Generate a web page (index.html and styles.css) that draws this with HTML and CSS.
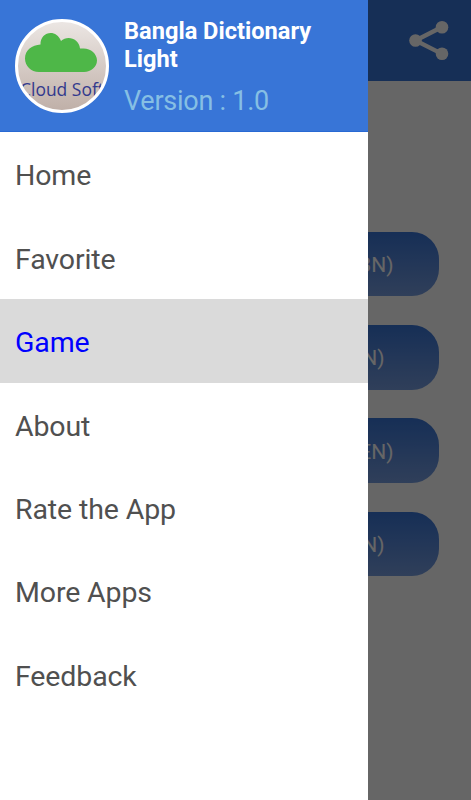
FILE: index.html
```html
<!DOCTYPE html>
<html lang="en">
<head>
<meta charset="utf-8">
<title>Bangla Dictionary Light</title>
<link rel="stylesheet" href="styles.css">
</head>
<body>
<main class="screen">
  <header class="toolbar">
    <svg class="share" viewBox="0 0 40 40" width="40" height="40">
      <path d="M33 6 6.500 19.500 33 32.800" fill="none" stroke="#fff" stroke-width="4.300"/>
      <circle cx="6.500" cy="19.500" r="6.300" fill="#fff"/>
      <circle cx="33" cy="6.300" r="6.300" fill="#fff"/>
      <circle cx="33" cy="32.800" r="6.300" fill="#fff"/>
    </svg>
  </header>
  <section class="actions">
    <div class="action wide">BN)</div>
    <div class="action">N)</div>
    <div class="action wide">EN)</div>
    <div class="action">N)</div>
  </section>
</main>
<div class="scrim"></div>
<aside class="drawer">
  <header class="profile">
    <svg class="logo" viewBox="0 0 96 96" width="96" height="96">
      <defs>
        <linearGradient id="paper" x1="0" y1="0" x2="0" y2="1"><stop offset="0" stop-color="#ece7e4"/><stop offset="1" stop-color="#bfafa7"/></linearGradient>
        <clipPath id="round"><circle cx="48" cy="48" r="45"/></clipPath>
      </defs>
      <circle cx="48" cy="48" r="45.500" fill="url(#paper)"/>
      <path d="M25 54H70a13.500 11.700 0 0 0 13-11.500C83 36 77 30.500 69.500 30.500H66C65 20 53 17 47 23C42 10 26 14 26.500 26.500C18 27 11 32 11 40.500C11 48 17 54 25 54Z" fill="#4eb748"/>
      <text class="logo-text" x="48" y="78.300" text-anchor="middle" textLength="84" lengthAdjust="spacingAndGlyphs" clip-path="url(#round)">Cloud Soft</text>
      <circle cx="48" cy="48" r="45.500" fill="none" stroke="#fff" stroke-width="3"/>
    </svg>
    <div class="details">
      <h1 class="name">Bangla Dictionary<br>Light</h1>
      <p class="version">Version : 1.0</p>
    </div>
  </header>
  <nav class="menu">
    <a class="item">Home</a>
    <a class="item">Favorite</a>
    <a class="item selected">Game</a>
    <a class="item">About</a>
    <a class="item">Rate the App</a>
    <a class="item">More Apps</a>
    <a class="item">Feedback</a>
  </nav>
</aside>
</body>
</html>
```
FILE: styles.css
```css
* { box-sizing: border-box; }
body {
  margin: 0;
  height: 800px;
  position: relative;
  overflow: hidden;
  background: #fff;
  font-family: Roboto, "Liberation Sans", sans-serif;
}
.toolbar {
  height: 81px;
  display: flex;
  align-items: center;
  justify-content: flex-end;
  padding-right: 22px;
  background: #3875d7;
}
.actions {
  display: flex;
  flex-direction: column;
  gap: 28.800px;
  padding: 151px 32.500px 0;
}
.action {
  height: 64.400px;
  display: flex;
  align-items: center;
  justify-content: flex-end;
  padding: 2px 54px 0 0;
  border-radius: 27px;
  background: linear-gradient(#3875d7, #789ee0);
  color: #fff;
  font-size: 21px;
}
.wide { padding-right: 45px; }
.scrim {
  position: absolute;
  inset: 0;
  background: rgba(0, 0, 0, 0.6);
}
.drawer {
  position: absolute;
  inset: 0 auto 0 0;
  width: 368px;
  background: #fff;
}
.profile {
  height: 132.300px;
  display: flex;
  padding: 18px 0 0 14px;
  gap: 14px;
  background: #3875d7;
  border-bottom: 1px solid #2869d3;
}
.logo { flex: none; }
.logo-text {
  font: 18.500px "Open Sans", sans-serif;
  fill: #32398d;
}
.name {
  margin: 0;
  color: #fff;
  font-size: 23.600px;
  font-weight: 700;
  line-height: 27.500px;
}
.version {
  margin: 12px 0 0;
  color: #86bfe4;
  font-size: 27px;
  letter-spacing: -0.250px;
  line-height: 32px;
}
.item {
  height: 83.430px;
  display: flex;
  align-items: center;
  padding: 3.500px 0 0 15px;
  color: #505050;
  font-size: 28.500px;
  letter-spacing: -0.120px;
}
.selected {
  background: #dadada;
  color: #00f;
}
```
